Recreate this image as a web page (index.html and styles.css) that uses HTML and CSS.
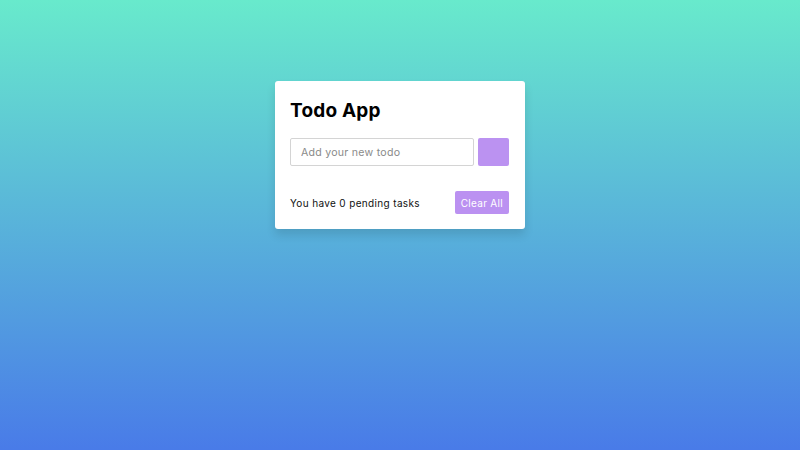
FILE: index.html
```html
<!DOCTYPE html>
<html lang="en">
<head>
<meta charset="utf-8">
<title>Todo App</title>
<link rel="stylesheet" href="styles.css">
</head>
<body>
  <div class="wrapper">
    <header class="title">Todo App</header>
    <div class="input-field">
      <input type="text" class="todo-input" placeholder="Add your new todo">
      <button class="add-btn" type="button" aria-label="Add"></button>
    </div>
    <div class="footer">
      <span class="pending">You have 0 pending tasks</span>
      <button class="clear-btn" type="button">Clear All</button>
    </div>
  </div>
</body>
</html>
```
FILE: styles.css
```css
* {
  box-sizing: border-box;
}
html, body {
  margin: 0;
  padding: 0;
}
body {
  height: 450px;
  overflow: hidden;
  background: linear-gradient(to bottom, #68EACC 0%, #497BE8 100%);
  font-family: Inter, "Open Sans", sans-serif;
}
.wrapper {
  width: 250px;
  margin: 81px auto 0;
  padding: 16px 16px 15px 15px;
  background: #fff;
  border-radius: 3px;
  box-shadow: 0 6px 10px rgba(0, 0, 0, 0.12);
}
.title {
  display: block;
  font-size: 19px;
  line-height: 28px;
  font-weight: 700;
  color: #000;
  letter-spacing: 0.2px;
}
.input-field {
  display: flex;
  height: 28px;
  margin-top: 13px;
}
.todo-input {
  flex: 1;
  min-width: 0;
  height: 100%;
  border: 1px solid #d4d4d4;
  border-radius: 2px;
  padding: 0 0 0 10px;
  font-family: inherit;
  font-size: 10.6px;
  letter-spacing: 0.25px;
  color: #333;
  outline: none;
}
.todo-input::placeholder {
  color: #8a8a8a;
}
.add-btn {
  width: 31px;
  height: 100%;
  margin-left: 4px;
  border: none;
  border-radius: 2px;
  background: #8E49E8;
  opacity: 0.6;
  padding: 0;
}
.footer {
  display: flex;
  align-items: center;
  justify-content: space-between;
  margin-top: 25px;
}
.pending {
  font-size: 10px;
  letter-spacing: 0.35px;
  color: #111;
}
.clear-btn {
  height: 23px;
  padding: 0 6px;
  border: none;
  border-radius: 2px;
  background: #8E49E8;
  opacity: 0.6;
  color: #fff;
  font-family: inherit;
  font-size: 10px;
  letter-spacing: 0.3px;
}
```
